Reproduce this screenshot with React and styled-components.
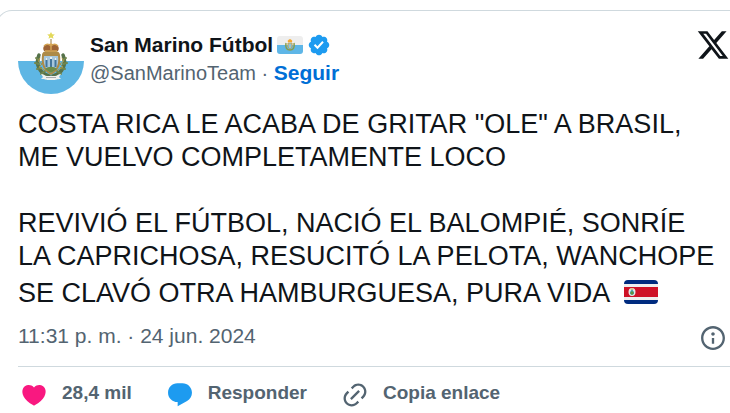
import styled, { createGlobalStyle, ThemeProvider } from 'styled-components'

const theme = {
  colors: {
    text: '#0f1419',
    muted: '#536471',
    link: '#006fd6',
    blue: '#1d9bf0',
    pink: '#f91880',
    border: '#cfd9de',
  },
}

const GlobalStyle = createGlobalStyle`
  * {
    box-sizing: border-box;
  }

  body {
    margin: 0;
    background: #fff;
    font-family: "Liberation Sans", Arial, sans-serif;
    overflow: hidden;
  }
`

const Card = styled.article`
  margin: 10px -20px 0 -4px;
  padding: 17px 19px 0 21px;
  border: 1px solid ${({ theme }) => theme.colors.border};
  border-bottom: 0;
  border-radius: 16px 16px 0 0;
  color: ${({ theme }) => theme.colors.text};
`

const Header = styled.header`
  display: flex;
  align-items: flex-start;
`

const Author = styled.div`
  flex: 1;
  padding: 3px 0 0 6px;
  font-size: 20px;
  line-height: 28px;
`

const Name = styled.a`
  display: flex;
  align-items: center;
  gap: 4px;
  color: inherit;
  font-size: 21px;
  font-weight: 700;
  text-decoration: none;
`

const Handle = styled.div`
  color: ${({ theme }) => theme.colors.muted};

  a {
    color: inherit;
    text-decoration: none;
  }
`

const Follow = styled.a`
  && {
    color: ${({ theme }) => theme.colors.link};
    font-size: 21px;
    font-weight: 700;
  }
`

const Icon = styled.svg`
  display: block;
  flex: none;
  width: ${({ $size }) => $size || 28}px;
  height: ${({ $size }) => $size || 28}px;
  fill: ${({ theme, $color }) => theme.colors[$color]};
`

const Flag = styled.svg`
  width: ${({ $width }) => $width}px;
  height: ${({ $height }) => $height}px;
`

const InlineFlag = styled(Flag)`
  margin: 7px 0 0 8px;
  vertical-align: -2px;
`

const Text = styled.p`
  margin: ${({ $last }) => ($last ? '33px 0 0' : '14px 0 0')};
  padding-right: 8px;
  font-size: 27px;
  line-height: 33px;
`

const Meta = styled.div`
  display: flex;
  align-items: flex-start;
  justify-content: space-between;
  padding: 12px 3px 14px 0;
  border-bottom: 1px solid ${({ theme }) => theme.colors.border};
  color: ${({ theme }) => theme.colors.muted};
  font-size: 21px;
  line-height: 28px;

  a {
    color: inherit;
    text-decoration: none;
  }
`

const InfoLink = styled.a`
  padding-top: 2px;
`

const Actions = styled.div`
  display: flex;
  gap: 34px;
  padding: 14px 0 0 2px;
`

const Action = styled.button`
  display: flex;
  align-items: flex-start;
  gap: 14px;
  padding: 0;
  border: 0;
  background: none;
  color: ${({ theme }) => theme.colors.muted};
  font: 700 19px/24px "Liberation Sans", Arial, sans-serif;
  cursor: pointer;
`

const Emblem = () => (
  <g>
    <path d="M33 4l1.200 2.200 2.600.2-1.900 1.800.6 2.600-2.500-1.300-2.500 1.300.6-2.600-1.900-1.800 2.600-.2z" fill="#e3d95c" />
    <path d="M32.500 11h1v4h-1z" fill="#98793a" />
    <g fill="none" strokeLinecap="round">
      <path d="M21 27c-4 9 0 18 10 21M45 27c4 9 0 18-10 21" stroke="#56724a" strokeWidth="3.500" />
      <path d="M18 30l3 2m-4 3l4 1m-2 5l4-1m0 6l4-3M48 30l-3 2m4 3l-4 1m2 5l-4-1m0 6l-4-3" stroke="#71864e" strokeWidth="2" />
      <path d="M22 30l-2 3 4 3-3 3 5 3M44 30l2 3-4 3 3 3-5 3" stroke="#a99443" strokeWidth="1" />
    </g>
    <path d="M24 27c0-3 4-5 9-5s9 2 9 5c1 8 0 15-9 20-9-5-10-12-9-20z" fill="#ad8a46" />
    <path d="M26 28h14c1 8-1 13-7 17-6-4-8-9-7-17z" fill="#a7c7dc" />
    <path d="M28.500 30v9M33 29v12M37.500 30v9" stroke="#43769d" strokeWidth="2" />
    <path d="M28.500 30v2M33 29v2M37.500 30v2" stroke="#e5eef0" strokeWidth="2" />
    <path d="M27 41c3-3 9-3 12 0l-6 4z" fill="#6c8c4b" />
    <path d="M26 23c-1-2-1-3 0-5 3-3 11-3 14 0 1 2 1 3 0 5z" fill="#9e6436" />
    <path d="M26 18c3-3 5-2 7 0 2-2 4-3 7 0M27 23h12M33 15v7" fill="none" stroke="#d4a555" strokeWidth="1.500" />
    <path d="M23 46c3 0 4 2 6 2h8c2 0 3-2 6-2l-2 3 2 2c-4 0-5 1-7 1h-6c-2 0-3-1-7-1l2-2z" fill="#eef1ef" />
    <path d="M28 49.500h10" stroke="#a8adb0" strokeWidth="1" />
  </g>
)

const AvatarImage = styled.svg`
  display: block;
  width: 66px;
  height: 66px;
  border-radius: 50%;
`

const Avatar = () => (
  <AvatarImage viewBox="0 0 66 66" role="img" aria-label="San Marino Fútbol">
    <path d="M0 0h66v33H0z" fill="#fff" />
    <path d="M0 33h66v33H0z" fill="#5eb6e4" />
    <Emblem />
  </AvatarImage>
)

const SanMarinoFlag = () => (
  <Flag viewBox="0 0 26 18" $width={26} $height={18} role="img" aria-label="San Marino">
    <path d="M3 0h20a3 3 0 013 3v6H0V3a3 3 0 013-3z" fill="#eee" />
    <path d="M0 9h26v6a3 3 0 01-3 3H3a3 3 0 01-3-3z" fill="#5eb6e7" />
    <path d="M9 7c-1 5 1 7 4 7s5-2 4-7" fill="none" stroke="#8a9d4b" strokeWidth="1.500" />
    <path d="M11 7h4v3c0 2-1 2-2 3-1-1-2-1-2-3z" fill="#8fc5dc" stroke="#c5a04d" />
    <path d="M11 6c-1-2 1-2 2-3 1 1 3 1 2 3z" fill="#f4a72e" />
  </Flag>
)

const CostaRicaFlag = () => (
  <InlineFlag viewBox="0 0 34 24" $width={34} $height={24} role="img" aria-label="Costa Rica">
    <path d="M4 0h26a4 4 0 014 4H0a4 4 0 014-4z" fill="#002b7f" />
    <path d="M0 4h34v16H0z" fill="#eee" />
    <path d="M0 7h34v10H0z" fill="#ce1126" />
    <path d="M0 20h34a4 4 0 01-4 4H4a4 4 0 01-4-4z" fill="#002b7f" />
    <ellipse cx="8" cy="12" rx="3.500" ry="4" fill="#e6e7e8" />
    <path d="M6 12l2-3 2 3v2l-2 1-2-1z" fill="#42a7b5" />
    <path d="M6 13l2-2 2 2-2 2z" fill="#64903d" />
    <path d="M6.500 9h3" stroke="#d7ad42" />
  </InlineFlag>
)

const XLogo = () => (
  <Icon viewBox="0 0 24 24" $size={34} $color="text">
    <path d="M18.244 2.250h3.308l-7.227 8.260 8.502 11.240H16.170l-5.214-6.817L4.990 21.750H1.680l7.730-8.835L1.254 2.250H8.080l4.713 6.231zm-1.161 17.520h1.833L7.084 4.126H5.117z" />
  </Icon>
)

const Verified = () => (
  <Icon viewBox="0 0 22 22" $size={24} $color="blue" role="img" aria-label="Cuenta verificada">
    <path d="M20.396 11c-.018-.646-.215-1.275-.57-1.816-.354-.54-.852-.972-1.438-1.246.223-.607.27-1.264.14-1.897-.131-.634-.437-1.218-.882-1.687-.47-.445-1.053-.75-1.687-.882-.633-.13-1.290-.083-1.897.14-.273-.587-.704-1.086-1.245-1.440S11.647 1.620 11 1.604c-.646.017-1.273.213-1.813.568s-.969.854-1.240 1.440c-.608-.223-1.267-.272-1.902-.14-.635.13-1.220.436-1.690.882-.445.47-.749 1.055-.878 1.688-.13.633-.08 1.290.144 1.896-.587.274-1.087.705-1.443 1.245-.356.54-.555 1.170-.574 1.817.02.647.218 1.276.574 1.817.356.54.856.972 1.443 1.245-.224.606-.274 1.263-.144 1.896.13.634.433 1.218.877 1.688.47.443 1.054.747 1.687.878.633.132 1.290.084 1.897-.136.274.586.705 1.084 1.246 1.439.54.354 1.170.551 1.816.569.647-.016 1.276-.213 1.817-.567s.972-.854 1.245-1.440c.604.239 1.266.296 1.903.164.636-.132 1.220-.447 1.680-.907.46-.46.776-1.044.908-1.681s.075-1.299-.165-1.903c.586-.274 1.084-.705 1.439-1.246.354-.54.551-1.170.569-1.816zM9.662 14.850l-3.429-3.428 1.293-1.302 2.072 2.072 4.400-4.794 1.347 1.246z" />
  </Icon>
)

const actions = [
  {
    label: '28,4 mil',
    color: 'pink',
    path: 'M20.884 13.190c-1.351 2.480-4.001 5.120-8.379 7.670l-.503.3-.504-.3c-4.379-2.550-7.029-5.190-8.382-7.670-1.360-2.500-1.410-4.860-.514-6.670.887-1.790 2.647-2.910 4.601-3.010 1.651-.09 3.368.56 4.798 2.010 1.429-1.450 3.146-2.100 4.796-2.010 1.954.1 3.714 1.220 4.601 3.010.896 1.810.846 4.170-.514 6.670z',
  },
  {
    label: 'Responder',
    color: 'blue',
    path: 'M1.751 10c0-4.420 3.584-8 8.005-8h4.366c4.490 0 8.129 3.640 8.129 8.130 0 2.960-1.607 5.680-4.196 7.110l-8.054 4.460v-3.690h-.067c-4.490.1-8.183-3.510-8.183-8.010z',
  },
  {
    label: 'Copia enlace',
    color: 'muted',
    path: 'M18.360 5.640c-1.950-1.960-5.110-1.960-7.070 0L9.880 7.050 8.460 5.640l1.420-1.420c2.730-2.730 7.160-2.730 9.900 0 2.730 2.740 2.730 7.170 0 9.900l-1.420 1.420-1.410-1.420 1.410-1.410c1.960-1.960 1.960-5.120 0-7.070zm-2.120 3.530l-7.070 7.070-1.410-1.410 7.070-7.070 1.410 1.410zm-12.020.71l1.420-1.420 1.410 1.420-1.410 1.410c-1.960 1.960-1.960 5.120 0 7.070 1.950 1.960 5.110 1.960 7.070 0l1.410-1.410 1.420 1.410-1.420 1.420c-2.730 2.730-7.160 2.730-9.900 0-2.730-2.740-2.730-7.170 0-9.900z',
  },
]

const App = () => {
  return (
    <ThemeProvider theme={theme}>
      <GlobalStyle />
      <Card>
        <Header>
          <Avatar />
          <Author>
            <Name href="#perfil">
              San Marino Fútbol <SanMarinoFlag /> <Verified />
            </Name>
            <Handle>
              <a href="#perfil">@SanMarinoTeam</a> · <Follow href="#seguir">Seguir</Follow>
            </Handle>
          </Author>
          <a href="#post" aria-label="Ver en X"><XLogo /></a>
        </Header>

        <Text>COSTA RICA LE ACABA DE GRITAR "OLE" A BRASIL, ME VUELVO COMPLETAMENTE LOCO</Text>
        <Text $last>
          REVIVIÓ EL FÚTBOL, NACIÓ EL BALOMPIÉ, SONRÍE
          <br />
          LA CAPRICHOSA, RESUCITÓ LA PELOTA, WANCHOPE
          <br />
          SE CLAVÓ OTRA HAMBURGUESA, PURA VIDA <CostaRicaFlag />
        </Text>

        <Meta>
          <a href="#post">11:31 p. m. · 24 jun. 2024</a>
          <InfoLink href="#info" aria-label="Información">
            <Icon viewBox="0 0 24 24" $color="muted">
              <path d="M13.500 8.500c0 .83-.67 1.500-1.500 1.500s-1.500-.67-1.500-1.500S11.170 7 12 7s1.500.67 1.500 1.500zM13 17v-5h-2v5h2zm-1 5.250c5.660 0 10.250-4.590 10.250-10.250S17.660 1.750 12 1.750 1.750 6.340 1.750 12 6.340 22.250 12 22.250zM20.250 12c0 4.560-3.690 8.250-8.250 8.250S3.750 16.560 3.750 12 7.440 3.750 12 3.750s8.250 3.690 8.250 8.250z" />
            </Icon>
          </InfoLink>
        </Meta>

        <Actions>
          {actions.map(({ label, color, path }) => (
            <Action key={label} type="button">
              <Icon viewBox="0 0 24 24" $color={color}><path d={path} /></Icon>
              {label}
            </Action>
          ))}
        </Actions>
      </Card>
    </ThemeProvider>
  )
}

export default App
